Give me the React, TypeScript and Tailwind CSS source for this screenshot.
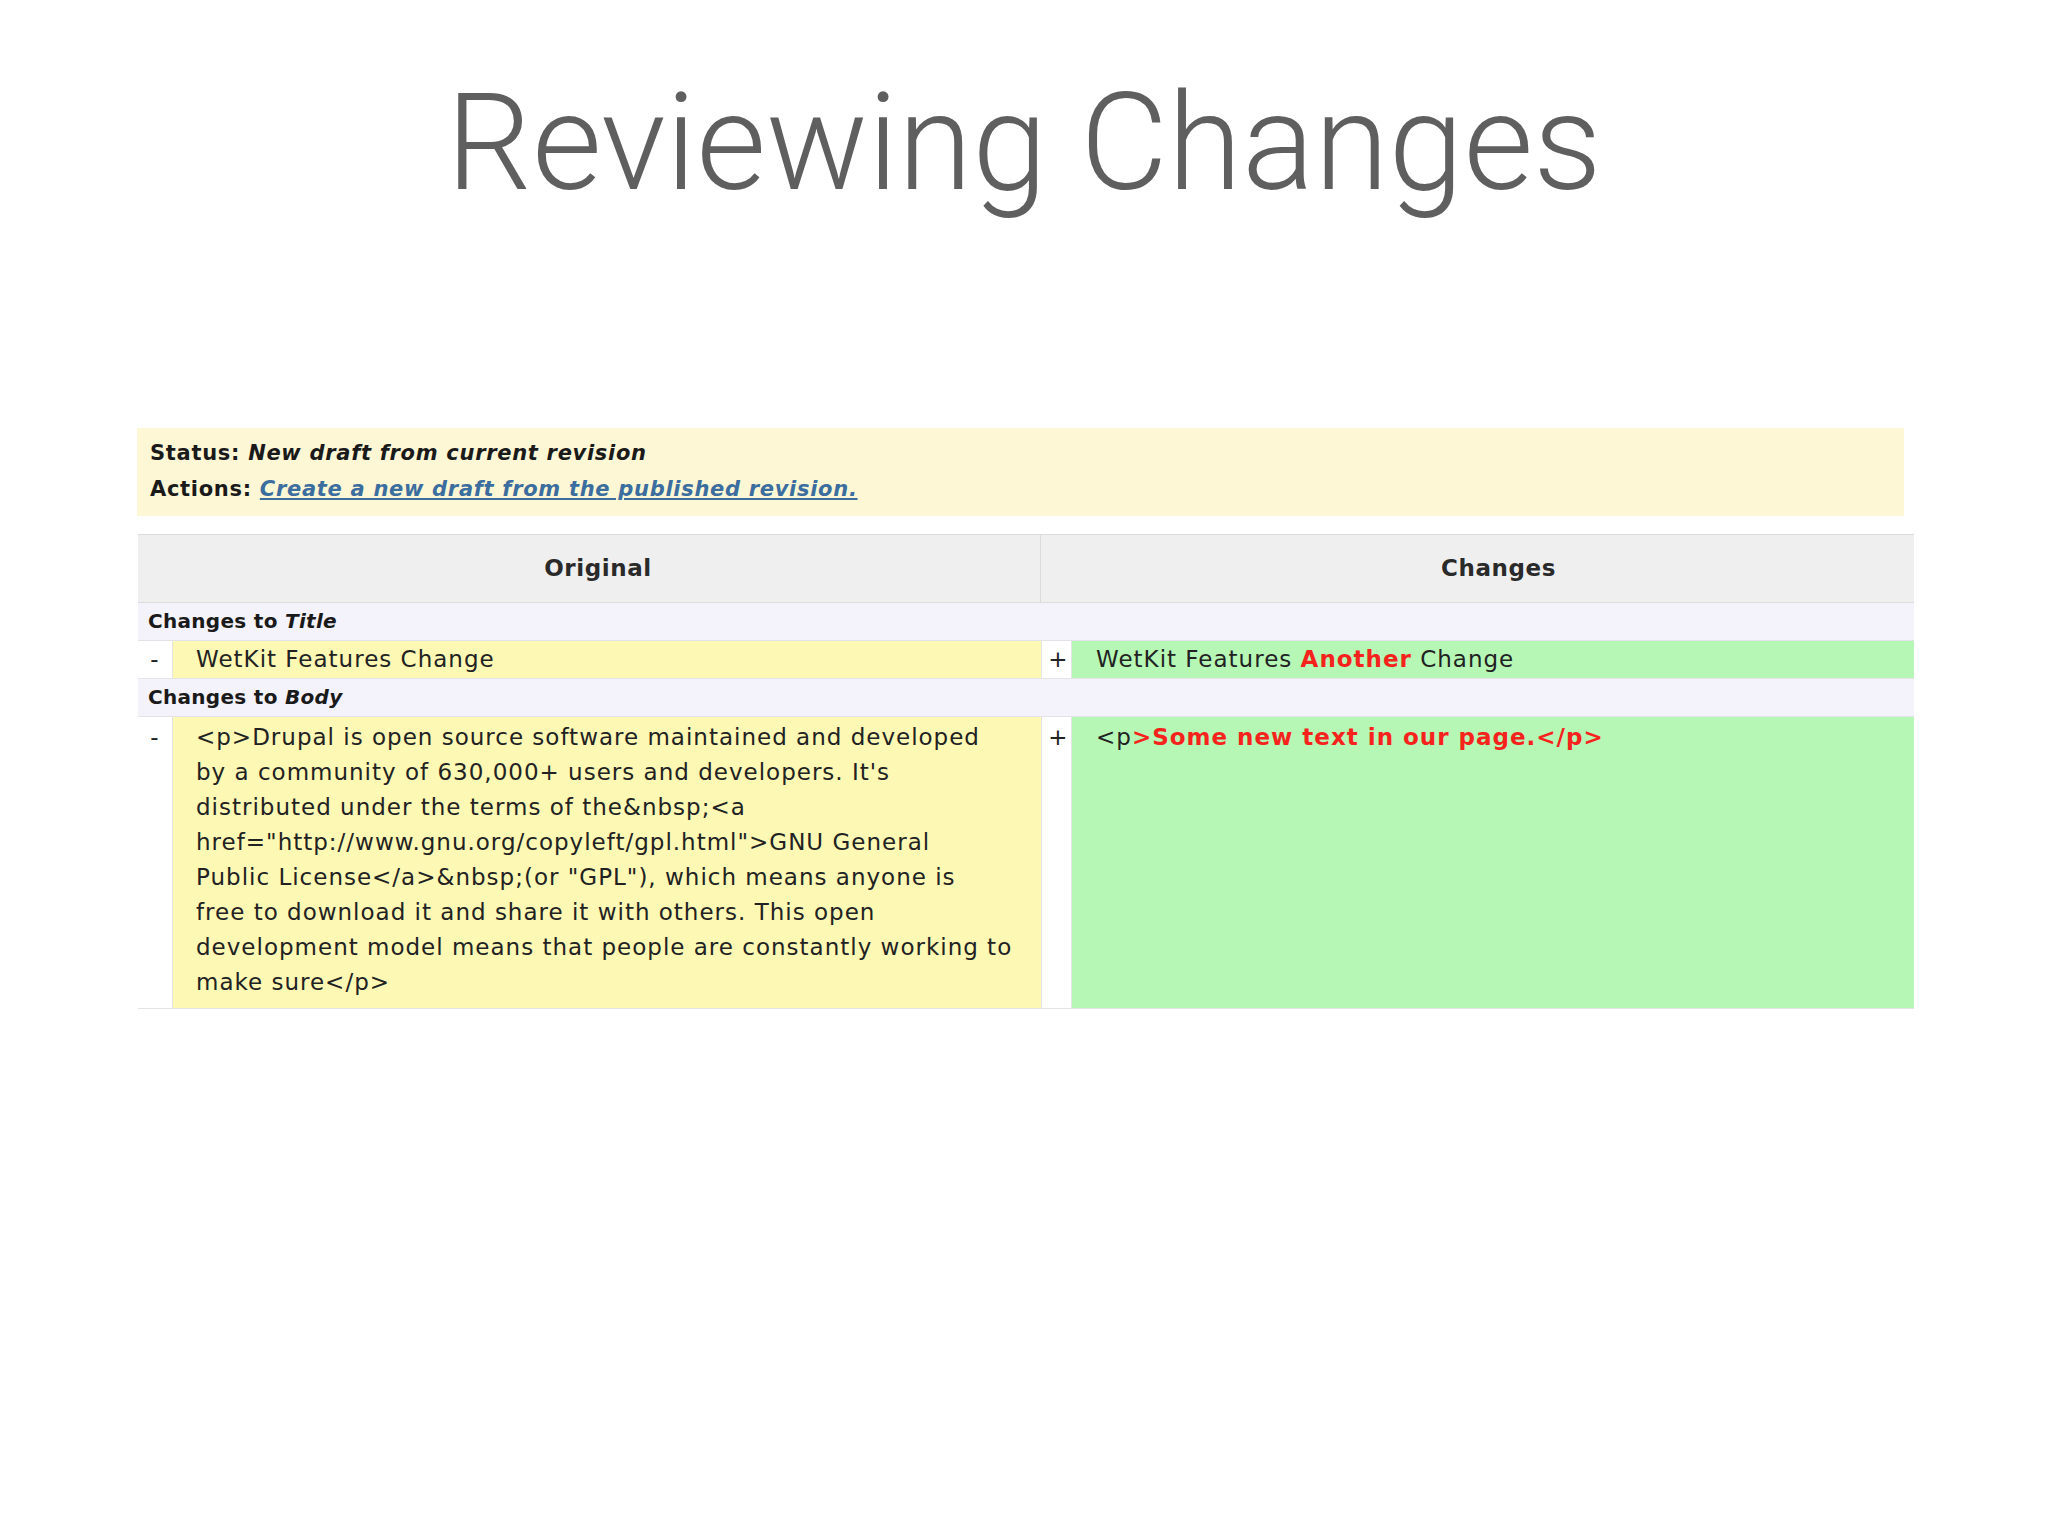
import React from 'react';

const bodyLines = [
  '<p>Drupal is open source software maintained and developed',
  "by a community of 630,000+ users and developers. It's",
  'distributed under the terms of the&nbsp;<a',
  'href="http://www.gnu.org/copyleft/gpl.html">GNU General',
  'Public License</a>&nbsp;(or "GPL"), which means anyone is',
  'free to download it and share it with others. This open',
  'development model means that people are constantly working to',
  'make sure</p>',
];

const SectionRow = ({ field }: { field: string }) => {
  return (
    <div className="flex h-[38px] items-center border-b border-[#e2e2e8] bg-[#f4f3fc] pl-[10px] text-[20px] font-bold leading-[35px] tracking-[0.3px] text-[#1a1a1a]">
      Changes to&nbsp;<i>{field}</i>
    </div>
  );
};

const DiffRow = ({
  className,
  left,
  right,
}: {
  className: string;
  left: React.ReactNode;
  right: React.ReactNode;
}) => {
  return (
    <div className={`flex border-b border-[#e4e4e4] ${className}`}>
      <div className="w-[35px] shrink-0 border-r border-[#e4e4e4] bg-white text-center">-</div>
      <div className="w-[868px] shrink-0 bg-[#fdf8b4] pl-[23px]">{left}</div>
      <div className="w-[31px] shrink-0 border-x border-[#e4e4e4] bg-white pl-[4px] text-center">+</div>
      <div className="flex-1 bg-[#b6f7b6] pl-[24px]">{right}</div>
    </div>
  );
};

export default function App() {
  return (
    <div className="min-h-screen w-full bg-white pb-10 font-['DejaVu_Sans',sans-serif]">
      <h1 className="pt-[76px] text-center font-['Roboto',sans-serif] text-[135px] font-light leading-none text-[#5f5f5f]">
        Reviewing Changes
      </h1>

      <div className="ml-[137px] mt-[217px] w-[1767px] bg-[#fdf7d6] pb-[9px] pl-[13px] pt-[7px] text-[21px] font-bold leading-[36px] tracking-[0.7px] text-[#1a1a1a]">
        <div>
          Status: <i>New draft from current revision</i>
        </div>
        <div>
          Actions:{' '}
          <a href="#" className="italic text-[#3b6d9f] underline">
            Create a new draft from the published revision.
          </a>
        </div>
      </div>

      <div className="ml-[138px] mt-[18px] w-[1776px] text-[23px] leading-[35px] tracking-[1px] text-[#222]">
        <div className="flex h-[69px] border-y border-[#dcdcdc] bg-[#efefef] font-bold tracking-[0.6px] text-[#2a2a2a]">
          <div className="flex w-[903px] items-center justify-center border-r border-[#dcdcdc] pl-[18px]">Original</div>
          <div className="flex flex-1 items-center justify-center pl-[42px]">Changes</div>
        </div>

        <SectionRow field="Title" />
        <DiffRow
          className="h-[38px] [&>div]:pt-[1px]"
          left="WetKit Features Change"
          right={
            <span>
              WetKit Features <b className="text-[#f5231c]">Another</b> Change
            </span>
          }
        />
        <SectionRow field="Body" />
        <DiffRow
          className="h-[292px] [&>div]:pt-[3px]"
          left={
            <div className="whitespace-nowrap">
              {bodyLines.map((line) => (
                <div key={line}>{line}</div>
              ))}
            </div>
          }
          right={
            <span>
              {'<p'}
              <b className="text-[#f5231c]">{'>Some new text in our page.</p>'}</b>
            </span>
          }
        />
      </div>
    </div>
  );
}
